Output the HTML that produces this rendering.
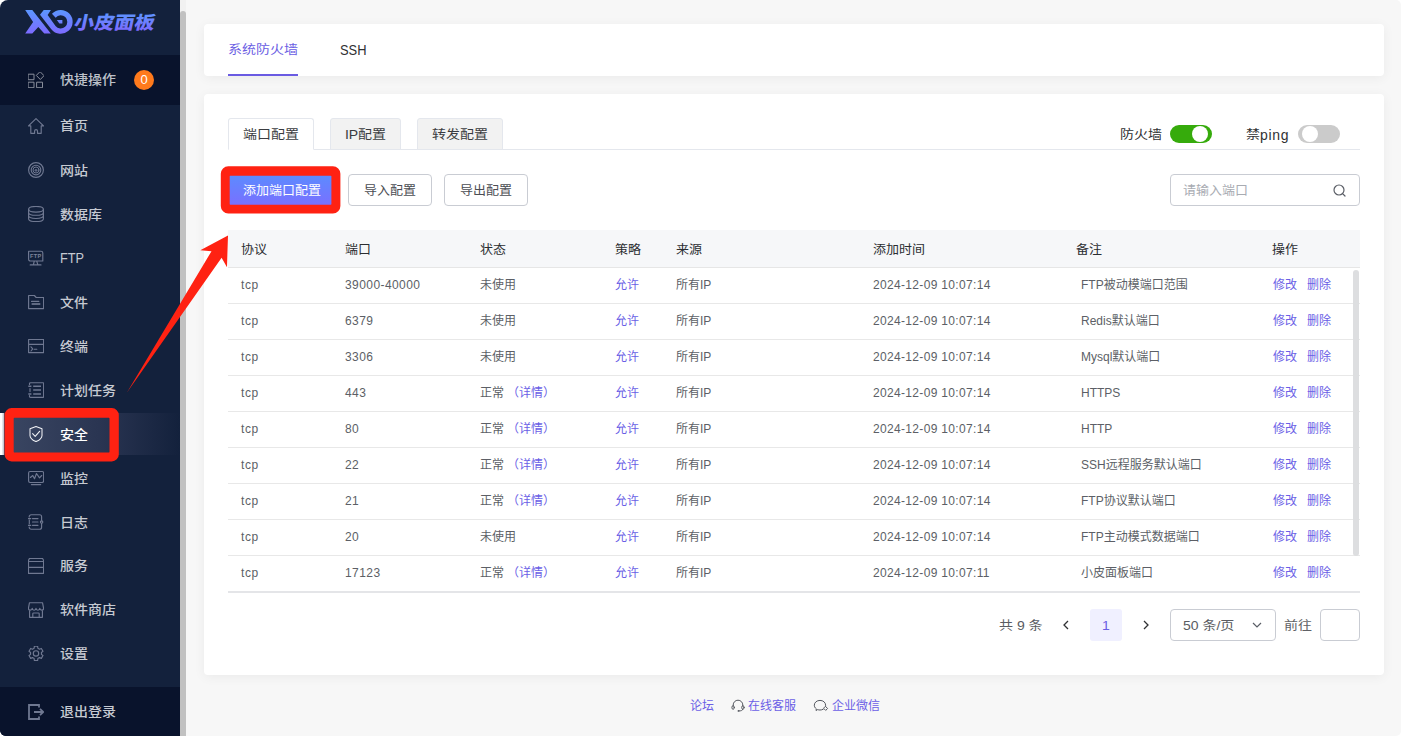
<!DOCTYPE html>
<html lang="zh-CN">
<head>
<meta charset="utf-8">
<title>小皮面板</title>
<style>
*{box-sizing:border-box;margin:0;padding:0}
html{background:#fff;width:1401px;height:736px;overflow:hidden}
body{position:relative;width:1401px;height:736px;overflow:hidden;background:#f7f7f7;border-radius:8px 5px 5px 6px;
 font-family:"Liberation Sans","Noto Sans CJK SC",sans-serif;font-size:12px;color:#606266;-webkit-font-smoothing:antialiased}
.abs{position:absolute}
/* sidebar */
#side{position:absolute;left:0;top:0;width:180px;height:736px;background:#13213c}
#strack{position:absolute;left:180px;top:0;width:6px;height:736px;background:#f1f1f1}
#sthumb{position:absolute;left:180px;top:11px;width:6px;height:740px;background:#c1c1c1;border-radius:3px}
.dark{position:absolute;left:0;width:180px;background:#09132c}
.mi{position:absolute;left:0;width:180px;height:42px;line-height:42px;color:#c6cad2;font-size:14px}
.mi span{position:absolute;left:60px;top:0;white-space:nowrap;transform:scaleY(.9);font-weight:500}
.mi svg{position:absolute;left:27px;top:12px;width:18px;height:18px;fill:none;stroke:#6f7891;stroke-width:1.15;stroke-linecap:round;stroke-linejoin:round}
.mi.act{background:linear-gradient(90deg,#3b4763 0%,#2a3552 55%,#13213c 100%);color:#fff}
.mi.act:before{content:"";position:absolute;left:0;top:0;width:3.5px;height:42px;background:linear-gradient(90deg,#fff 40%,#b9bdc9)}
.mi.act svg{stroke:#f1f2f6;stroke-width:1.05}
/* cards */
.card{position:absolute;left:204px;width:1180px;background:#fff;border-radius:4px;box-shadow:0 2px 12px rgba(0,0,0,.055)}
.t14{font-size:14px;white-space:nowrap;position:absolute;transform:scaleY(.89)}
.s14{display:inline-block;transform:scaleY(.89)}
.s13{display:inline-block;transform:scaleY(.93)}
.tab{position:absolute;top:118px;height:32px;line-height:32px;border:1px solid #e4e7ed;border-radius:3px 3px 0 0;background:#f2f2f2;font-size:14px;color:#3a3c40;text-align:center}
.tab.on{background:#fff;border-bottom-color:#fff}
.btn{position:absolute;top:174px;height:32px;line-height:32px;border:1px solid #c9ccd3;border-radius:4px;background:#fff;color:#4b4d53;font-size:13px;text-align:center;white-space:nowrap}
.sw{position:absolute;top:125px;width:42px;height:18px;border-radius:9px}
.sw i{position:absolute;top:1px;width:16px;height:16px;border-radius:50%;background:#fff}
/* table */
#th{position:absolute;left:228px;top:230px;width:1132px;height:38px;background:#f6f7f9;border-bottom:1px solid #e6e6e6}
#th span{position:absolute;top:0;line-height:40px;font-size:13px;color:#2b2d31;white-space:nowrap;transform:scaleY(.92)}
.row{position:absolute;left:228px;width:1132px;height:36px;border-bottom:1px solid #e8e8e8;line-height:35px;font-size:12px;color:#5c5f66}
.row span{position:absolute;top:0;white-space:nowrap}
.lk{color:#6b5fe6}
.pg{position:absolute;top:609px;height:32px;line-height:34px;font-size:14px;color:#5a5c62;white-space:nowrap}
.ft{position:absolute;top:698px;line-height:16px;font-size:12px;color:#6b5fe6;white-space:nowrap}
</style>
</head>
<body>
<div id="side">
<svg class="abs" style="left:0;top:0" width="180" height="44" viewBox="0 0 180 44">
<defs><linearGradient id="lg" gradientUnits="userSpaceOnUse" x1="0" y1="10" x2="0" y2="34"><stop offset="0" stop-color="#5c96ff"/><stop offset="1" stop-color="#7d6aff"/></linearGradient><linearGradient id="lg2" gradientUnits="userSpaceOnUse" x1="0" y1="-16" x2="0" y2="2"><stop offset="0" stop-color="#5c96ff"/><stop offset="1" stop-color="#7d6aff"/></linearGradient></defs>
<g fill="url(#lg)">
<path d="M25.200 10.100 H32.300 L50.800 33.600 H44.300 L38.300 26.900 L32.300 33.600 H25.200 L33.100 21.900 Z"/>
<path d="M40 14.700 L43.700 10.100 H50.900 L47.650 15.100 L55.510 25.960 A6.600 6.600 0 1 0 55.640 17.630 L51.950 13.710 A11.960 11.960 0 1 1 51.300 29.270 Z"/>
<path d="M56.800 20.100 H62.400 V23.600 H59.400 Z"/>
</g>
<text x="0" y="0" font-size="18" font-weight="900" font-family="Noto Sans CJK SC,sans-serif" fill="url(#lg2)" transform="translate(73,28.800) skewX(-12) scale(1.120,1)">小皮面板</text>
</svg>
<div class="dark" style="top:55px;height:50px"></div>
<div class="mi" style="top:59px;color:#bcc0c9"><svg viewBox="0 0 16 16" style="left:28px;top:13px;width:16px;height:16px;stroke:#8a8f9c;stroke-width:1"><path d="M.5 2.5 H6 V8 H.5 Z M.5 10.500 H6 V16 H.5 Z M9 10.500 H14.500 V16 H9 Z M12.300 0.200 L16 4 L12.300 7.800 L8.600 4 Z" transform="translate(0,-.3)"/></svg><span>快捷操作</span><b style="position:absolute;left:134px;top:11px;width:20px;height:20px;border-radius:50%;background:#ff7a1c;color:#fff;font-size:13px;line-height:20px;text-align:center;font-weight:normal">0</b></div>
<div class="mi" style="top:105px"><svg viewBox="0 0 16 16" style="left:28px;top:13px;width:16px;height:16px"><path d="M8 .6 L.5 7.9 H2.8 V15.3 H6.6 V13.1 a1.45 1.45 0 0 1 2.9 0 V15.3 H13.2 V7.9 H15.5 Z"/></svg><span>首页</span></div>
<div class="mi" style="top:149px"><svg viewBox="0 0 16 16" style="left:28px;top:13px;width:16px;height:16px"><circle cx="8" cy="8" r="7.4"/><circle cx="8" cy="8" r="4.8"/><circle cx="8" cy="8" r="3" stroke-width="1"/><circle cx="8" cy="8.3" r="1.4" fill="#5d6681" stroke="none"/></svg><span>网站</span></div>
<div class="mi" style="top:193px"><svg viewBox="0 0 16 16" style="left:28px;top:13px;width:16px;height:16px"><ellipse cx="8" cy="3.3" rx="7.4" ry="2.8"/><path d="M.6 3.3 V12.7 M15.4 3.3 V12.7 M.6 6.4 C.6 10.2 15.4 10.2 15.4 6.4 M.6 9.6 C.6 13.4 15.4 13.4 15.4 9.6 M.6 12.7 C.6 16.5 15.4 16.5 15.4 12.7"/></svg><span>数据库</span></div>
<div class="mi" style="top:237px"><svg viewBox="0 0 16 16" style="left:28px;top:13px;width:16px;height:16px"><path d="M.6 1.2 H13 a1.8 1.8 0 0 1 1.8 1.8 V11 H2.4 a1.8 1.8 0 0 1 -1.8 -1.8 Z M6.3 11 L5.4 14.6 M8.7 11 L9.8 14.6 M2.2 14.9 H13" /><text x="7.7" y="8.4" text-anchor="middle" font-size="5.6" font-weight="bold" font-family="Liberation Sans,sans-serif" fill="#7d859b" stroke="none" letter-spacing=".3">FTP</text></svg><span style="transform:scaleX(.91);transform-origin:0 50%">FTP</span></div>
<div class="mi" style="top:281px"><svg viewBox="0 0 16 16" style="left:28px;top:13px;width:16px;height:16px"><path d="M.6 1.5 H6.4 L8.2 3.5 H15.6 V14.6 H.6 Z M3.5 7.4 H10.8"/><path d="M3.6 10 H12.3" stroke-width="1.7" stroke-linecap="butt"/></svg><span>文件</span></div>
<div class="mi" style="top:325px"><svg viewBox="0 0 16 16" style="left:28px;top:13px;width:16px;height:16px"><path d="M.6 1.5 H15.6 V14.6 H.6 Z M.6 6.4 H15.6 M3 8.8 L4.7 10.9 L3 13 M6.2 11.2 H8.8"/></svg><span>终端</span></div>
<div class="mi" style="top:369px"><svg viewBox="0 0 16 16" style="left:28px;top:13px;width:16px;height:16px"><path d="M1.5 2.4 V1.7 a1 1 0 0 1 1 -1 H15 a.6 .6 0 0 1 .6 .6 V14.8 a.6 .6 0 0 1 -.6 .6 H2.5 a1 1 0 0 1 -1 -1 V13.6 M2 6.6 V9.6" /><path d="M.3 4.2 H3.4 M.3 12 H3.4 M5.2 4.2 H13 M5.2 8 H13 M5.2 12 H13" stroke-width="1.6" stroke-linecap="butt"/></svg><span>计划任务</span></div>
<div class="mi act" style="top:413px"><svg viewBox="0 0 16 16" style="left:28px;top:13px;width:16px;height:16px"><path d="M8 .5 L2 2.7 V9.4 C2 12 5 14.3 8 15.6 C11 14.3 14 12 14 9.4 V2.7 Z M4.6 7.6 L7.2 10.4 L11.6 5.4"/></svg><span>安全</span></div>
<div class="mi" style="top:457px"><svg viewBox="0 0 16 16" style="left:28px;top:13px;width:16px;height:16px"><rect x=".6" y="1.5" width="15" height="11" rx="1.4"/><path d="M3.4 14.6 H12.7 M2.4 7.5 L4.8 5.5 L6.5 8.7 L8.5 3.5 L11.5 7.8 L13.7 5.5"/></svg><span>监控</span></div>
<div class="mi" style="top:501px"><svg viewBox="0 0 16 16" style="left:28px;top:13px;width:16px;height:16px"><path d="M1.2 3 V2.7 a2 2 0 0 1 2 -2 H11.6 a2 2 0 0 1 2 2 V6.8 M13.6 9.2 V13.2 a2 2 0 0 1 -2 2 H3.2 a2 2 0 0 1 -2 -2 V13 M1.3 6 V9.7 M0 4.6 H2.8 M0 11.3 H2.8 M4.5 4.6 H10 M4.5 8 H10 M4.5 11.3 H10"/><circle cx="13.6" cy="8" r="1.2"/></svg><span>日志</span></div>
<div class="mi" style="top:545px"><svg viewBox="0 0 16 16" style="left:28px;top:13px;width:16px;height:16px"><path d="M1.4 .5 H14.6 L15.6 2.4 V15.3 H.5 V2.4 Z M.5 3.5 H15.6 M.5 9.4 H15.6"/></svg><span>服务</span></div>
<div class="mi" style="top:589px"><svg viewBox="0 0 16 16" style="left:28px;top:13px;width:16px;height:16px"><path d="M1.5 .7 H14.5 L15.6 6.3 a1.9 1.9 0 0 1 -3.8 0 a1.9 1.9 0 0 1 -3.8 0 a1.9 1.9 0 0 1 -3.8 0 a1.9 1.9 0 0 1 -3.8 0 Z M1.6 8.2 V15.3 H14.4 V8.2 M4.8 15.3 V11.8 a.8 .8 0 0 1 .8 -.8 H10.4 a.8 .8 0 0 1 .8 .8 V15.3"/></svg><span>软件商店</span></div>
<div class="mi" style="top:633px"><svg viewBox="0 0 16 16" style="left:28px;top:13px;width:16px;height:16px"><path d="M6.12 2.23 L6.36 0.29 L9.64 0.29 L9.88 2.23 L11.54 3.19 L13.34 2.42 L14.98 5.27 L13.42 6.44 L13.42 8.36 L14.98 9.53 L13.34 12.38 L11.54 11.61 L9.88 12.57 L9.64 14.51 L6.36 14.51 L6.12 12.57 L4.46 11.61 L2.66 12.38 L1.02 9.53 L2.58 8.36 L2.58 6.44 L1.02 5.27 L2.66 2.42 L4.46 3.19Z"/><circle cx="8" cy="7.4" r="2.7"/></svg><span>设置</span></div>
<div class="dark" style="top:687px;height:49px"></div>
<div class="mi" style="top:691px"><svg viewBox="0 0 16 16" style="left:28px;top:13px;width:16px;height:16px;stroke-width:1.8;stroke-linecap:butt;stroke-linejoin:miter"><path d="M11 3.400 V1 H1 V15 H11 V12.600 M6 8 H15 M12 4.800 L15.300 8 L12 11.200"/></svg><span>退出登录</span></div>
</div>
<div id="strack"></div><div id="sthumb"></div>
<div class="card" style="top:24px;height:52px"></div>
<div class="card" style="top:94px;height:581px"></div>
<div class="t14" style="left:228px;top:40px;line-height:20px;color:#6a5de3">系统防火墙</div>
<div class="abs" style="left:228px;top:74px;width:70px;height:2px;background:#6a5be2"></div>
<div class="t14" style="left:340px;top:40px;line-height:20px;color:#303133;transform:scaleX(.92);transform-origin:0 50%">SSH</div>
<div class="abs" style="left:228px;top:149px;width:1132px;height:1px;background:#e4e7ed"></div>
<div class="tab on" style="left:228px;width:86px"><span class="s14">端口配置</span></div>
<div class="tab" style="left:330px;width:71px"><span class="s14">IP配置</span></div>
<div class="tab" style="left:417px;width:86px"><span class="s14">转发配置</span></div>
<div class="t14" style="left:1120px;top:125px;line-height:20px;color:#303133">防火墙</div>
<div class="sw" style="left:1170px;background:#36ab0c"><i style="left:22px"></i></div>
<div class="t14" style="left:1246px;top:125px;line-height:20px;color:#303133">禁<span style="letter-spacing:.7px;display:inline-block;transform:scaleY(1.12)">ping</span></div>
<div class="sw" style="left:1298px;background:#cbcbcb"><i style="left:4px"></i></div>
<div class="btn" style="left:228px;width:108px;border:0;line-height:34px;color:#fff;background:linear-gradient(180deg,#5b8cff,#7a6fff);border-radius:3px"><span class="s13">添加端口配置</span></div>
<div class="btn" style="left:348px;width:84px"><span class="s13">导入配置</span></div>
<div class="btn" style="left:444px;width:84px"><span class="s13">导出配置</span></div>
<div class="btn" style="left:1170px;width:190px;text-align:left;padding-left:12px;color:#a8abb2"><span class="s13">请输入端口</span><svg class="abs" style="right:13px;top:9px" width="13" height="13" viewBox="0 0 13 13" fill="none" stroke="#5a5e66" stroke-width="1.2" stroke-linecap="round"><circle cx="6" cy="6" r="5"/><path d="M9.800 9.800 L12 12"/></svg></div>
<div id="th"><span style="left:13px">协议</span><span style="left:117px">端口</span><span style="left:252px">状态</span><span style="left:387px">策略</span><span style="left:448px">来源</span><span style="left:645px">添加时间</span><span style="left:848px">备注</span><span style="left:1044px">操作</span></div>
<div class="row" style="top:268px"><span style="left:13px;letter-spacing:.6px">tcp</span><span style="left:117px;letter-spacing:.42px">39000-40000</span><span style="left:252px">未使用</span><span class="lk" style="left:387px">允许</span><span style="left:448px">所有IP</span><span style="left:645px;letter-spacing:.33px">2024-12-09 10:07:14</span><span style="left:853px">FTP被动模端口范围</span><span class="lk" style="left:1045px">修改</span><span class="lk" style="left:1079px">删除</span></div>
<div class="row" style="top:304px"><span style="left:13px;letter-spacing:.6px">tcp</span><span style="left:117px;letter-spacing:.42px">6379</span><span style="left:252px">未使用</span><span class="lk" style="left:387px">允许</span><span style="left:448px">所有IP</span><span style="left:645px;letter-spacing:.33px">2024-12-09 10:07:14</span><span style="left:853px">Redis默认端口</span><span class="lk" style="left:1045px">修改</span><span class="lk" style="left:1079px">删除</span></div>
<div class="row" style="top:340px"><span style="left:13px;letter-spacing:.6px">tcp</span><span style="left:117px;letter-spacing:.42px">3306</span><span style="left:252px">未使用</span><span class="lk" style="left:387px">允许</span><span style="left:448px">所有IP</span><span style="left:645px;letter-spacing:.33px">2024-12-09 10:07:14</span><span style="left:853px">Mysql默认端口</span><span class="lk" style="left:1045px">修改</span><span class="lk" style="left:1079px">删除</span></div>
<div class="row" style="top:376px"><span style="left:13px;letter-spacing:.6px">tcp</span><span style="left:117px;letter-spacing:.42px">443</span><span style="left:252px">正常</span><span class="lk" style="left:279px">（详情）</span><span class="lk" style="left:387px">允许</span><span style="left:448px">所有IP</span><span style="left:645px;letter-spacing:.33px">2024-12-09 10:07:14</span><span style="left:853px">HTTPS</span><span class="lk" style="left:1045px">修改</span><span class="lk" style="left:1079px">删除</span></div>
<div class="row" style="top:412px"><span style="left:13px;letter-spacing:.6px">tcp</span><span style="left:117px;letter-spacing:.42px">80</span><span style="left:252px">正常</span><span class="lk" style="left:279px">（详情）</span><span class="lk" style="left:387px">允许</span><span style="left:448px">所有IP</span><span style="left:645px;letter-spacing:.33px">2024-12-09 10:07:14</span><span style="left:853px">HTTP</span><span class="lk" style="left:1045px">修改</span><span class="lk" style="left:1079px">删除</span></div>
<div class="row" style="top:448px"><span style="left:13px;letter-spacing:.6px">tcp</span><span style="left:117px;letter-spacing:.42px">22</span><span style="left:252px">正常</span><span class="lk" style="left:279px">（详情）</span><span class="lk" style="left:387px">允许</span><span style="left:448px">所有IP</span><span style="left:645px;letter-spacing:.33px">2024-12-09 10:07:14</span><span style="left:853px">SSH远程服务默认端口</span><span class="lk" style="left:1045px">修改</span><span class="lk" style="left:1079px">删除</span></div>
<div class="row" style="top:484px"><span style="left:13px;letter-spacing:.6px">tcp</span><span style="left:117px;letter-spacing:.42px">21</span><span style="left:252px">正常</span><span class="lk" style="left:279px">（详情）</span><span class="lk" style="left:387px">允许</span><span style="left:448px">所有IP</span><span style="left:645px;letter-spacing:.33px">2024-12-09 10:07:14</span><span style="left:853px">FTP协议默认端口</span><span class="lk" style="left:1045px">修改</span><span class="lk" style="left:1079px">删除</span></div>
<div class="row" style="top:520px"><span style="left:13px;letter-spacing:.6px">tcp</span><span style="left:117px;letter-spacing:.42px">20</span><span style="left:252px">未使用</span><span class="lk" style="left:387px">允许</span><span style="left:448px">所有IP</span><span style="left:645px;letter-spacing:.33px">2024-12-09 10:07:14</span><span style="left:853px">FTP主动模式数据端口</span><span class="lk" style="left:1045px">修改</span><span class="lk" style="left:1079px">删除</span></div>
<div class="row" style="top:556px"><span style="left:13px;letter-spacing:.6px">tcp</span><span style="left:117px;letter-spacing:.42px">17123</span><span style="left:252px">正常</span><span class="lk" style="left:279px">（详情）</span><span class="lk" style="left:387px">允许</span><span style="left:448px">所有IP</span><span style="left:645px;letter-spacing:.33px">2024-12-09 10:07:11</span><span style="left:853px">小皮面板端口</span><span class="lk" style="left:1045px">修改</span><span class="lk" style="left:1079px">删除</span></div>
<div class="abs" style="left:228px;top:591px;width:1132px;height:2px;background:#e4e5e8"></div>
<div class="abs" style="left:1353px;top:270px;width:6px;height:286px;border-radius:3px;background:#dddee0"></div>
<div class="pg" style="left:999px"><span class="s14">共 9 条</span></div>
<svg class="abs" style="left:1061px;top:619px" width="10" height="12" viewBox="0 0 10 12" fill="none" stroke="#303133" stroke-width="1.3"><path d="M7 2 L3 6 L7 10"/></svg>
<div class="pg" style="left:1090px;width:32px;text-align:center;background:#f0f0ff;border-radius:3px;color:#6a5de3"><span class="s14">1</span></div>
<svg class="abs" style="left:1141px;top:619px" width="10" height="12" viewBox="0 0 10 12" fill="none" stroke="#303133" stroke-width="1.3"><path d="M3 2 L7 6 L3 10"/></svg>
<div class="pg" style="left:1170px;width:106px;border:1px solid #c9ccd3;border-radius:4px;line-height:32px;padding-left:12px"><span class="s14">50 条/页</span><svg class="abs" style="right:12px;top:11px" width="12" height="8" viewBox="0 0 12 8" fill="none" stroke="#5a5e66" stroke-width="1.2"><path d="M2 2 L6 6 L10 2"/></svg></div>
<div class="pg" style="left:1284px;color:#606266"><span class="s14">前往</span></div>
<div class="pg" style="left:1320px;width:40px;border:1px solid #c9ccd3;border-radius:4px"></div>
<div class="ft" style="left:690px">论坛</div>
<div class="ft" style="left:748px">在线客服</div>
<div class="ft" style="left:832px">企业微信</div>
<svg class="abs" style="left:731px;top:699px" width="14" height="14" viewBox="0 0 14 14" fill="none" stroke="#55585f" stroke-width="1" stroke-linecap="round"><path d="M2.200 7 V6 a4.800 4.800 0 0 1 9.600 0 V7 M11.800 10.300 C11.800 11.600 9.800 11.900 8.300 11.900"/><ellipse cx="2.100" cy="8.500" rx="1.200" ry="1.800"/><ellipse cx="11.900" cy="8.500" rx="1.200" ry="1.800"/><circle cx="7.500" cy="11.900" r=".9" fill="#55585f" stroke="none"/></svg>
<svg class="abs" style="left:813px;top:699px" width="16" height="14" viewBox="0 0 16 14" fill="none" stroke="#55585f" stroke-width="1" stroke-linecap="round" stroke-linejoin="round"><path d="M10.200 10.300 C9.200 10.800 8 11 7 11 C6.200 11 5.400 10.900 4.700 10.600 L3 11.500 L3.300 9.800 C2 8.900 1.300 7.600 1.300 6.200 C1.300 3.500 3.800 1.400 7 1.400 C10.200 1.400 12.600 3.500 12.600 6.200 L12.600 7.200"/><path d="M12.700 7.600 L14.600 9.500 L12.700 11.400 L10.800 9.500 Z"/></svg>
<svg class="abs" style="left:0;top:0;pointer-events:none" width="1401" height="736" viewBox="0 0 1401 736"><path d="M126.800 392.800 L211.500 251.200 L200.300 250.300 L228 235.600 L227 267.200 L221.600 257.700 Z" fill="#ff2212"/>
<path fill="#ff2212" fill-rule="evenodd" d="M228.3 166.3 H332.9 A7.5 7.5 0 0 1 340.4 173.8 V205.9 A7.5 7.5 0 0 1 332.9 213.4 H228.3 A7.5 7.5 0 0 1 220.8 205.9 V173.8 A7.5 7.5 0 0 1 228.3 166.3 Z M230.29999999999998 175.7 H330.79999999999995 A0.6 0.6 0 0 1 331.4 176.29999999999998 V204.1 A0.6 0.6 0 0 1 330.79999999999995 204.7 H230.29999999999998 A0.6 0.6 0 0 1 229.7 204.1 V176.29999999999998 A0.6 0.6 0 0 1 230.29999999999998 175.7 Z"/>
<path fill="#ff2212" fill-rule="evenodd" d="M11.6 408.1 H111.8 A7 7 0 0 1 118.8 415.1 V454.4 A7 7 0 0 1 111.8 461.4 H11.6 A7 7 0 0 1 4.6 454.4 V415.1 A7 7 0 0 1 11.6 408.1 Z M14.299999999999999 417.8 H108.9 A0.6 0.6 0 0 1 109.5 418.40000000000003 V451.79999999999995 A0.6 0.6 0 0 1 108.9 452.4 H14.299999999999999 A0.6 0.6 0 0 1 13.7 451.79999999999995 V418.40000000000003 A0.6 0.6 0 0 1 14.299999999999999 417.8 Z"/></svg>
</body>
</html>
